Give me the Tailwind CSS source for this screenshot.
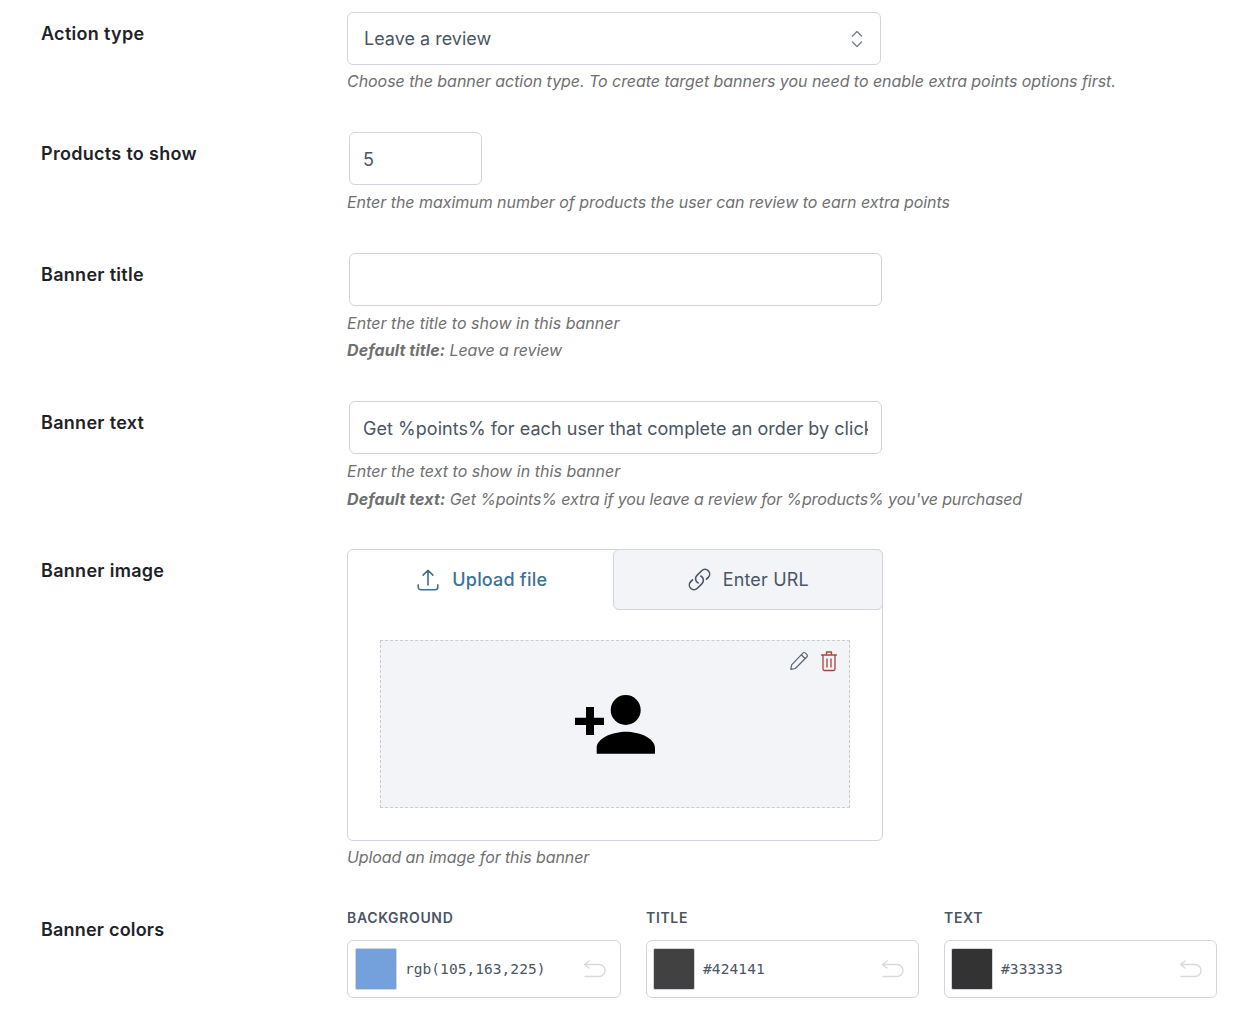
<!DOCTYPE html>
<html><head><meta charset="utf-8"><script src="https://cdn.jsdelivr.net/npm/@tailwindcss/browser@4"></script></head>
<body class="bg-white font-['Inter',sans-serif] text-[#4b5563] overflow-hidden h-[1022px]">
<div class="pl-[41px] pt-[12px]">
  <!-- Action type -->
  <div class="flex h-[120px]">
    <div class="w-[306px] shrink-0 pt-[11px] text-[18px] leading-[22px] font-semibold tracking-[0.3px] text-[#1f2328]">Action type</div>
    <div>
      <div class="w-[534px] h-[53px] border border-[#d1d5db] rounded-[6px] flex items-center justify-between pl-[16px] pr-[16px] text-[18px] text-[#4b5563]">
        <span>Leave a review</span>
        <svg width="14" height="20" viewBox="0 0 14 20" fill="none" stroke="#7b8591" stroke-width="1.5" stroke-linecap="round" stroke-linejoin="round"><path d="M2.500 7 7 2.500 11.500 7M2.500 13 7 17.500 11.500 13"/></svg>
      </div>
      <p class="mt-[4px] text-[16px] leading-[24px] italic tracking-[-0.05px] text-[#707070] whitespace-nowrap">Choose the banner action type. To create target banners you need to enable extra points options first.</p>
    </div>
  </div>
  <!-- Products -->
  <div class="flex h-[121px]">
    <div class="w-[306px] shrink-0 pt-[11px] text-[18px] leading-[22px] font-semibold tracking-[0.3px] text-[#1f2328]">Products to show</div>
    <div>
      <div class="ml-[2px] w-[133px] h-[53px] border border-[#d1d5db] rounded-[6px] flex items-center pl-[13px] pt-[2px] text-[18px]">5</div>
      <p class="mt-[5px] text-[16px] leading-[24px] italic tracking-[-0.04px] text-[#707070] whitespace-nowrap">Enter the maximum number of products the user can review to earn extra points</p>
    </div>
  </div>
  <!-- Banner title -->
  <div class="flex h-[148px]">
    <div class="w-[306px] shrink-0 pt-[11px] text-[18px] leading-[22px] font-semibold tracking-[0.3px] text-[#1f2328]">Banner title</div>
    <div>
      <div class="ml-[2px] w-[533px] h-[53px] border border-[#d1d5db] rounded-[6px]"></div>
      <p class="mt-[5px] text-[16px] leading-[24px] italic tracking-[0.03px] text-[#707070] whitespace-nowrap">Enter the title to show in this banner</p>
      <p class="mt-[3px] text-[16px] leading-[24px] italic tracking-[-0.12px] text-[#707070] whitespace-nowrap"><b class="font-bold tracking-[0.1px]">Default title:</b> Leave a review</p>
    </div>
  </div>
  <!-- Banner text -->
  <div class="flex h-[148px]">
    <div class="w-[306px] shrink-0 pt-[11px] text-[18px] leading-[22px] font-semibold tracking-[0.3px] text-[#1f2328]">Banner text</div>
    <div>
      <div class="ml-[2px] w-[533px] h-[53px] border border-[#d1d5db] rounded-[6px] flex items-center px-[13px] pt-[2px] text-[18px] tracking-[0.04px]"><span class="block w-full overflow-hidden whitespace-nowrap">Get %points% for each user that complete an order by clicking here</span></div>
      <p class="mt-[5px] text-[16px] leading-[24px] italic tracking-[0.03px] text-[#707070] whitespace-nowrap">Enter the text to show in this banner</p>
      <p class="mt-[4px] text-[16px] leading-[24px] italic tracking-[-0.12px] text-[#707070] whitespace-nowrap"><b class="font-bold tracking-[0.1px]">Default text:</b> Get %points% extra if you leave a review for %products% you've purchased</p>
    </div>
  </div>
  <!-- Banner image -->
  <div class="flex h-[361px]">
    <div class="w-[306px] shrink-0 pt-[11px] text-[18px] leading-[22px] font-semibold tracking-[0.3px] text-[#1f2328]">Banner image</div>
    <div>
      <div class="w-[536px] h-[292px] border border-[#d1d5db] rounded-[6px]">
        <div class="flex h-[61px] -mt-px">
          <div class="w-[265px] pl-[2px] flex items-center justify-center gap-[11px] text-[18px] font-medium tracking-[0.2px] text-[#3d7196]">
            <svg width="26" height="26" viewBox="0 0 24 24" fill="none" stroke="#3d7196" stroke-width="1.5" stroke-linecap="round" stroke-linejoin="round"><path d="M12 16.500V3M7.500 7.500 12 3l4.500 4.500M3 16.500v2.250A2.250 2.250 0 0 0 5.250 21h13.500A2.250 2.250 0 0 0 21 18.750V16.500"/></svg>
            <span>Upload file</span>
          </div>
          <div class="w-[271px] -mr-px flex items-center justify-center gap-[11px] text-[18px] tracking-[0.15px] text-[#4b5563] bg-[#f2f4f8] border border-[#d1d5db] rounded-[6px]">
            <svg width="25" height="25" viewBox="0 0 24 24" fill="none" stroke="#4b5563" stroke-width="1.5" stroke-linecap="round" stroke-linejoin="round"><path d="M13.190 8.688a4.500 4.500 0 0 1 1.242 7.244l-4.500 4.500a4.500 4.500 0 0 1-6.364-6.364l1.757-1.757m13.350-.622 1.757-1.757a4.500 4.500 0 0 0-6.364-6.364l-4.500 4.500a4.500 4.500 0 0 0 1.242 7.244"/></svg>
            <span>Enter URL</span>
          </div>
        </div>
        <div class="relative mt-[30px] ml-[32px] w-[470px] h-[168px] bg-[#f2f4f8] border border-dashed border-[#c9ccd3] flex items-center justify-center">
          <div class="absolute top-[9px] right-[10px] flex items-center gap-[9px]">
            <svg width="22" height="22" viewBox="0 0 24 24" fill="none" stroke="#5b6470" stroke-width="1.300" stroke-linejoin="round" stroke-linecap="round"><path d="M16.500 3.200a1.600 1.600 0 0 1 2.300 0l1.900 1.900a1.600 1.600 0 0 1 0 2.300L8 20.200l-5 1 1-5zM14.500 5.200l4.300 4.300"/></svg>
            <svg width="20" height="22" viewBox="0 0 20 22" fill="none" stroke="#a8453d" stroke-width="1.300" stroke-linejoin="round" stroke-linecap="round"><path d="M2.500 5h15M4 5v14a1.500 1.500 0 0 0 1.500 1.500h9A1.500 1.500 0 0 0 16 19V5M7.500 5V2h5v3M8 9v8M12 9v8"/></svg>
          </div>
          <svg class="mt-[0px]" width="80" height="60" viewBox="0 0 80 60" fill="#000"><circle cx="50.700" cy="16" r="15"/><path d="M21.700 59.700v-6C21.700 44 38 37.700 51 37.700S80 44 80 53.700v6zM0 23.700h11V13h8v10.700h10V31H19v10h-8V31H0z"/></svg>
        </div>
      </div>
      <p class="mt-[4px] text-[16px] leading-[24px] italic tracking-[-0.1px] text-[#707070] whitespace-nowrap">Upload an image for this banner</p>
    </div>
  </div>
  <!-- Banner colors -->
  <div class="flex">
    <div class="w-[306px] shrink-0 pt-[9px] text-[18px] leading-[22px] font-semibold tracking-[0.2px] text-[#1f2328]">Banner colors</div>
    <div class="flex gap-[25px] -mt-[2px]">
      <div class="w-[274px]">
        <div class="text-[14px] leading-[20px] font-semibold tracking-[0.65px] text-[#4b5563]">BACKGROUND</div>
        <div class="mt-[12px] h-[58px] border border-[#d1d5db] rounded-[6px] flex items-center pl-[7px] pr-[13px]">
          <span class="w-[42px] h-[42px] bg-[#74a1dc] rounded-[2px] border border-[#d1d5db]"></span>
          <span class="ml-[8px] pt-[2px] font-['DejaVu_Sans_Mono',monospace] text-[14.500px] tracking-[0.05px] flex-1">rgb(105,163,225)</span>
          <svg width="24" height="18" viewBox="0 0 24 18" fill="none" stroke="#d8dade" stroke-width="1.400" stroke-linecap="round" stroke-linejoin="round"><path d="M6 1 1.500 4.500 6 8M1.500 4.500H16a6 6 0 0 1 0 12H2"/></svg>
        </div>
      </div>
      <div class="w-[273px]">
        <div class="text-[14px] leading-[20px] font-semibold tracking-[0.65px] text-[#4b5563]">TITLE</div>
        <div class="mt-[12px] h-[58px] border border-[#d1d5db] rounded-[6px] flex items-center pl-[6px] pr-[13px]">
          <span class="w-[42px] h-[42px] bg-[#424141] rounded-[2px] border border-[#d1d5db]"></span>
          <span class="ml-[8px] pt-[2px] font-['DejaVu_Sans_Mono',monospace] text-[14.500px] tracking-[0.1px] flex-1">#424141</span>
          <svg width="24" height="18" viewBox="0 0 24 18" fill="none" stroke="#d8dade" stroke-width="1.400" stroke-linecap="round" stroke-linejoin="round"><path d="M6 1 1.500 4.500 6 8M1.500 4.500H16a6 6 0 0 1 0 12H2"/></svg>
        </div>
      </div>
      <div class="w-[273px]">
        <div class="text-[14px] leading-[20px] font-semibold tracking-[0.65px] text-[#4b5563]">TEXT</div>
        <div class="mt-[12px] h-[58px] border border-[#d1d5db] rounded-[6px] flex items-center pl-[6px] pr-[13px]">
          <span class="w-[42px] h-[42px] bg-[#333333] rounded-[2px] border border-[#d1d5db]"></span>
          <span class="ml-[8px] pt-[2px] font-['DejaVu_Sans_Mono',monospace] text-[14.500px] tracking-[0.1px] flex-1">#333333</span>
          <svg width="24" height="18" viewBox="0 0 24 18" fill="none" stroke="#d8dade" stroke-width="1.400" stroke-linecap="round" stroke-linejoin="round"><path d="M6 1 1.500 4.500 6 8M1.500 4.500H16a6 6 0 0 1 0 12H2"/></svg>
        </div>
      </div>
    </div>
  </div>
</div>
</body></html>
